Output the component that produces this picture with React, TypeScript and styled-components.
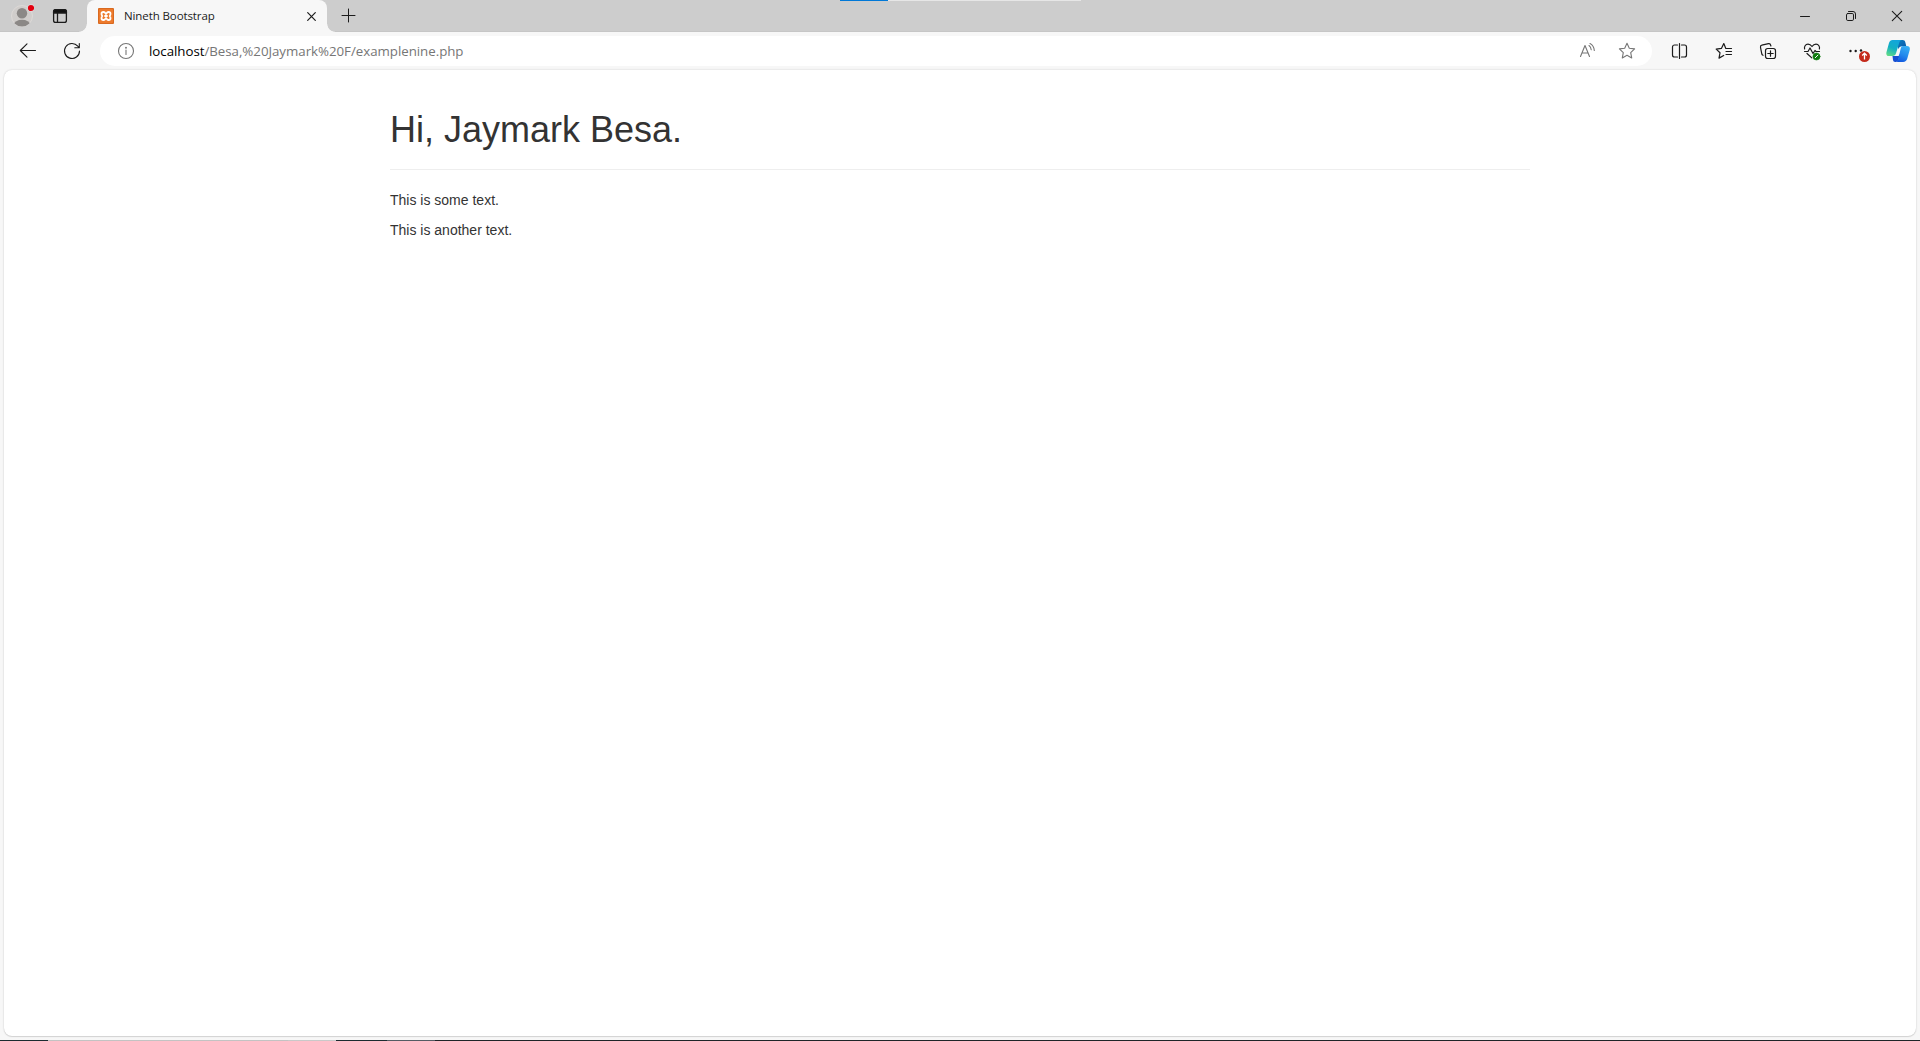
import React from 'react';
import styled, { createGlobalStyle } from 'styled-components';

const GlobalStyle = createGlobalStyle`
  * { box-sizing: border-box; }
  html, body { margin: 0; padding: 0; overflow: hidden; }
  svg { display: block; flex: none; }
`;

const Window = styled.div`
  display: flex;
  flex-direction: column;
  width: 1920px;
  height: 1041px;
  overflow: hidden;
  background: #f7f7f7;
  font-family: 'Open Sans', 'Noto Sans', sans-serif;
`;

const TitleBar = styled.header`
  position: relative;
  display: flex;
  height: 32px;
  flex: none;
  background: #cdcdcd;
  box-shadow: inset 0 -1px 0 #c6c6c6;
`;

const Progress = styled.div`
  position: absolute;
  top: 0;
  left: 840px;
  display: flex;
  width: 241px;
  height: 1px;
  background: #e6e6e6;
`;

const ProgressValue = styled.div`
  width: 48px;
  background: #0078d7;
`;

const Slot = styled.div<{ $width: number }>`
  display: flex;
  flex: none;
  align-items: center;
  justify-content: center;
  width: ${(p) => p.$width}px;
  height: 100%;
`;

const Profile = styled(Slot)`
  margin-left: 2px;
`;

const Workspaces = styled(Slot)`
  margin-right: 9px;
`;

const Tab = styled.div`
  position: relative;
  z-index: 1;
  display: flex;
  align-items: center;
  width: 240px;
  height: 32px;
  padding: 0 4px 0 11px;
  border-radius: 8px 8px 0 0;
  background: #f7f7f7;

  &::before,
  &::after {
    content: '';
    position: absolute;
    bottom: 0;
    width: 8px;
    height: 8px;
  }
  &::before {
    left: -8px;
    background: radial-gradient(circle at 0 0, transparent 7.3px, #f7f7f7 8px);
  }
  &::after {
    right: -8px;
    background: radial-gradient(circle at 100% 0, transparent 7.3px, #f7f7f7 8px);
  }
`;

const TabTitle = styled.span`
  flex: 1;
  margin-left: 10px;
  font-size: 11.5px;
  line-height: 16px;
  letter-spacing: -0.1px;
  color: #1b1b1b;
  white-space: nowrap;
`;

const WindowControls = styled.div`
  display: flex;
  margin-left: auto;
`;

const Toolbar = styled.nav`
  display: flex;
  align-items: center;
  height: 38px;
  flex: none;
  padding: 0 2px 0 6px;
`;

const AddressBar = styled.div`
  display: flex;
  align-items: center;
  width: 1552px;
  height: 30px;
  margin: 0 6px;
  padding: 0 5px 0 6px;
  border-radius: 15px;
  background: #fff;
`;

const Url = styled.span`
  flex: 1;
  margin-left: 3px;
  font-size: 13.3px;
  line-height: 20px;
  letter-spacing: -0.03px;
  color: #767676;
  white-space: nowrap;
`;

const Host = styled.span`
  color: #000;
`;

const Page = styled.main`
  width: 1912px;
  height: 966px;
  flex: none;
  margin: 0 4px;
  border-radius: 8px;
  background: #fff;
  box-shadow: 0 1px 1px rgba(0, 0, 0, 0.1), 0 0 2px rgba(0, 0, 0, 0.18);
  overflow: hidden;
`;

const Container = styled.div`
  width: 1170px;
  margin: 0 auto;
  padding: 0 15px;
  font-family: 'Liberation Sans', Arial, sans-serif;
  font-size: 14px;
  line-height: 20px;
  color: #333;
`;

const PageHeader = styled.div`
  margin: 40px 0 20px;
  padding-bottom: 9px;
  border-bottom: 1px solid #eee;
`;

const Heading = styled.h1`
  margin: 0 0 10px;
  font-size: 36px;
  font-weight: 400;
  line-height: 1.1;
`;

const Paragraph = styled.p`
  margin: 0 0 10px;
`;

const TaskbarEdge = styled.footer`
  display: flex;
  height: 1px;
  flex: none;
  margin-top: 4px;
  background: #1f2428;
`;

const TaskbarPart = styled.div<{ $width: number; $color: string }>`
  width: ${(p) => p.$width}px;
  background: ${(p) => p.$color};
`;

type LineIconProps = { children: React.ReactNode; color?: string; weight?: number };

const LineIcon = ({ children, color = '#1b1b1b', weight = 1.1 }: LineIconProps) => (
  <svg width="24" height="24" viewBox="0 0 24 24" fill="none" stroke={color} strokeWidth={weight} strokeLinecap="round" strokeLinejoin="round">
    {children}
  </svg>
);

const AvatarIcon = () => (
  <svg width="24" height="32" viewBox="0 0 24 32">
    <defs>
      <clipPath id="avatar"><circle cx="12" cy="16" r="10.5" /></clipPath>
    </defs>
    <circle cx="12" cy="16" r="10.5" fill="#d0cdcb" stroke="#dfdcd9" strokeWidth="0.8" />
    <g clipPath="url(#avatar)" fill="#8b8886">
      <circle cx="12" cy="13.3" r="5.2" />
      <ellipse cx="12" cy="24.5" rx="8" ry="4.7" />
    </g>
    <circle cx="21" cy="8" r="3.8" fill="#ddd" />
    <circle cx="21" cy="8" r="3.1" fill="#e3000f" />
  </svg>
);

const FaviconIcon = () => (
  <svg width="16" height="16" viewBox="0 0 16 16">
    <rect width="16" height="16" rx="1" fill="#d9691f" />
    <rect x="1" y="1" width="14" height="14" rx="1" fill="#ed7a2c" />
    <path
      d="M8 6L6.800 4.500Q6.300 4 5.300 4Q3.500 4 3.500 5.700Q3.500 7 4.300 8Q3.500 9 3.500 10.300Q3.500 12 5.300 12Q6.300 12 6.800 11.500L8 10L9.200 11.500Q9.700 12 10.700 12Q12.500 12 12.500 10.300Q12.500 9 11.700 8Q12.500 7 12.500 5.700Q12.500 4 10.700 4Q9.700 4 9.200 4.500ZM6.300 8H9.700"
      fill="none"
      stroke="#fff"
      strokeWidth="1.8"
      strokeLinejoin="round"
    />
  </svg>
);

const starPath = 'M12 4.3l2.300 4.900 5.300.700-3.900 3.700 1 5.300-4.700-2.600-4.700 2.600 1-5.300-3.900-3.700 5.300-.700z';

const CopilotIcon = () => (
  <svg width="24" height="22" viewBox="0 0 24 22">
    <defs>
      <linearGradient id="cpLeft" x1="0.6" y1="0" x2="0.2" y2="1">
        <stop offset="0" stopColor="#12a5dc" />
        <stop offset="0.5" stopColor="#12afc4" />
        <stop offset="1" stopColor="#5fdc86" />
      </linearGradient>
      <linearGradient id="cpRight" x1="0.7" y1="0" x2="0.3" y2="1">
        <stop offset="0" stopColor="#35aef4" />
        <stop offset="0.55" stopColor="#2388ec" />
        <stop offset="1" stopColor="#1256df" />
      </linearGradient>
      <linearGradient id="cpTop" x1="0" y1="0" x2="1" y2="1">
        <stop offset="0" stopColor="#0a7fc0" />
        <stop offset="1" stopColor="#0b55a8" />
      </linearGradient>
    </defs>
    <path d="M11 0h5.600c1.600 0 2.300.800 2.700 2.200l1 4h-4c-2.200 0-3.300 1-4 3z" fill="url(#cpTop)" />
    <path d="M6.500 16h6l2-3-2 6.500c-.500 1.600-1.300 2.500-2.800 2.500H9.200c-1.400 0-1.900-.900-2.200-2z" fill="#174fd1" />
    <path d="M6.600 0h9.300c-1.500 0-2.100 1.100-2.600 2.600L10.100 13c-.700 2.200-1.700 3-3.500 3H3C.700 16-.100 14.400.500 12L3 3C3.600 1 4.700 0 6.600 0z" fill="url(#cpLeft)" />
    <path d="M17.200 6H21c2.300 0 3.300 1.600 2.700 4l-2.400 8.500c-.700 2.300-2 3.500-4.200 3.500H9.200c1.700 0 2.400-1 2.900-2.600L14.600 9c.500-1.800 1-3 2.600-3z" fill="url(#cpRight)" />
  </svg>
);

export default function App() {
  return (
    <>
      <GlobalStyle />
      <Window>
        <TitleBar>
          <Progress><ProgressValue /></Progress>
          <Profile $width={40}><AvatarIcon /></Profile>
          <Workspaces $width={36}>
            <LineIcon weight={1.3}>
              <rect x="5.600" y="5.600" width="12.800" height="12.800" rx="2" />
              <path d="M5.600 9V7.600a2 2 0 0 1 2-2h8.800a2 2 0 0 1 2 2V9z" fill="#111" />
              <path d="M9.500 9v9.400" />
            </LineIcon>
          </Workspaces>
          <Tab>
            <FaviconIcon />
            <TabTitle>Nineth Bootstrap</TabTitle>
            <Slot $width={24}>
              <LineIcon weight={1.2}><path d="M8.700 8.700l7.600 7.600M16.300 8.700l-7.600 7.600" /></LineIcon>
            </Slot>
          </Tab>
          <Slot $width={42}>
            <LineIcon weight={1}><path d="M6 11.500h13M12.500 5v13" /></LineIcon>
          </Slot>
          <WindowControls>
            <Slot $width={46}><LineIcon weight={1}><path d="M7.500 12.500h9" /></LineIcon></Slot>
            <Slot $width={46}>
              <LineIcon weight={1}>
                <rect x="7.500" y="9.500" width="7" height="7" rx="1.300" />
                <path d="M9.500 7.500h4.500a2.500 2.500 0 0 1 2.500 2.500v4.500" />
              </LineIcon>
            </Slot>
            <Slot $width={46}><LineIcon><path d="M7.300 7.300l9.400 9.400M16.700 7.300l-9.400 9.400" /></LineIcon></Slot>
          </WindowControls>
        </TitleBar>

        <Toolbar>
          <Slot $width={44}>
            <LineIcon><path d="M4.500 11.500h15M11 4.800L4.300 11.500l6.700 6.700" /></LineIcon>
          </Slot>
          <Slot $width={44}>
            <LineIcon><path d="M19.500 12a7.500 7.500 0 1 1-1.700-4.800l1.200 1.300M19.300 4.500v4.300h-4.500" /></LineIcon>
          </Slot>
          <AddressBar>
            <Slot $width={40}>
              <LineIcon color="#767676">
                <circle cx="12" cy="12" r="7.500" />
                <path d="M12 11v4.500" />
                <circle cx="12" cy="8.700" r="0.400" fill="#767676" />
              </LineIcon>
            </Slot>
            <Url><Host>localhost</Host>/Besa,%20Jaymark%20F/examplenine.php</Url>
            <Slot $width={40}>
              <LineIcon color="#767676">
                <path d="M5.500 17.500L10 6.500l4.500 11M7 14h6" />
                <path d="M14 6.500c1.300.900 2 2.300 2.200 4.200M15 4.500c2.600 1.300 4 3.600 4.300 7" />
              </LineIcon>
            </Slot>
            <Slot $width={40}><LineIcon color="#767676"><path d={starPath} /></LineIcon></Slot>
          </AddressBar>
          <Slot $width={44}>
            <LineIcon weight={1.200}>
              <path d="M9.500 6H6.500a2 2 0 0 0-2 2v8a2 2 0 0 0 2 2h3M13.500 6h3a2 2 0 0 1 2 2v8a2 2 0 0 1-2 2h-3M11.500 4.500v15" />
            </LineIcon>
          </Slot>
          <Slot $width={44}>
            <LineIcon weight={1.200}>
              <path d="M14.500 9.500l-.700-.100-2-4.800-2.400 4.800-5.200.700 3.800 3.700-1 5.300 4.700-2.600M14.500 9.500h5M14 12.500h5.500M14 15.500h5.500" />
            </LineIcon>
          </Slot>
          <Slot $width={44}>
            <LineIcon weight={1.200}>
              <rect x="9.500" y="9.500" width="10" height="10" rx="2.200" />
              <path d="M14.500 11.800v5.400M11.800 14.500h5.400" />
              <path d="M7 16.300c-.600-.200-1-.600-1.200-1.300L4.500 8.300c-.200-1 .3-1.900 1.300-2.100l6.700-1.500c1-.200 1.900.400 2.100 1.300l.300 1" />
            </LineIcon>
          </Slot>
          <Slot $width={44}>
            <LineIcon weight={1.200}>
              <path d="M4.600 10C4 7.700 5.400 5.200 8 5.200c1.700 0 3 .900 4 2.300 1-1.400 2.300-2.300 4-2.300 2.600 0 4 2.500 3.400 4.800M7 14.500l4.800 4.400M4.500 12.500h3.500l2-3.500 3 5.500 2-3 1 1h3.500" />
              <circle cx="16.500" cy="17.500" r="3.600" fill="#107c10" stroke="#107c10" strokeWidth="0.500" />
              <path d="M15.300 18.700l2.600-2.600" stroke="#fff" strokeWidth="1" />
            </LineIcon>
          </Slot>
          <Slot $width={44}>
            <svg width="30" height="24" viewBox="0 0 30 24">
              <g fill="#1b1b1b">
                <circle cx="9.500" cy="12" r="1.200" /><circle cx="14.700" cy="12" r="1.200" /><circle cx="20" cy="11.500" r="1.200" />
              </g>
              <circle cx="23.500" cy="17.500" r="5.500" fill="#c42b1c" />
              <path d="M23.500 20.500v-6M21.200 16.500l2.300-2.300 2.300 2.300" fill="none" stroke="#fff" strokeWidth="1.300" />
            </svg>
          </Slot>
          <Slot $width={40}><CopilotIcon /></Slot>
        </Toolbar>

        <Page>
          <Container>
            <PageHeader><Heading>Hi, Jaymark Besa.</Heading></PageHeader>
            <Paragraph>This is some text.</Paragraph>
            <Paragraph>This is another text.</Paragraph>
          </Container>
        </Page>

        <TaskbarEdge>
          <TaskbarPart $width={48} $color="#1c2b30" />
          <TaskbarPart $width={240} $color="#c3c3c3" />
          <TaskbarPart $width={48} $color="#c9c9c9" />
          <TaskbarPart $width={51} $color="#1c2b30" />
          <TaskbarPart $width={48} $color="#555c64" />
        </TaskbarEdge>
      </Window>
    </>
  );
}
